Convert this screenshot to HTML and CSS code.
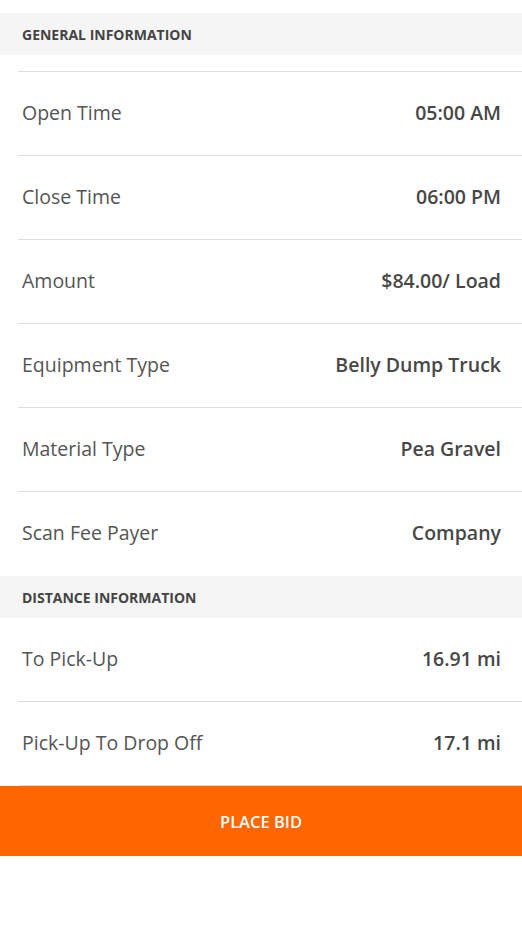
FILE: index.html
```html
<!DOCTYPE html>
<html>
<head>
<meta charset="utf-8">
<link rel="stylesheet" href="styles.css">
</head>
<body>
<div class="page">
  <div class="section-head">GENERAL INFORMATION</div>
  <div class="spacer"></div>
  <div class="row"><span class="label">Open Time</span><span class="value">05:00 AM</span></div>
  <div class="row"><span class="label">Close Time</span><span class="value">06:00 PM</span></div>
  <div class="row"><span class="label">Amount</span><span class="value">$84.00/ Load</span></div>
  <div class="row"><span class="label">Equipment Type</span><span class="value">Belly Dump Truck</span></div>
  <div class="row"><span class="label">Material Type</span><span class="value">Pea Gravel</span></div>
  <div class="row last"><span class="label">Scan Fee Payer</span><span class="value">Company</span></div>
  <div class="section-head">DISTANCE INFORMATION</div>
  <div class="row"><span class="label">To Pick-Up</span><span class="value">16.91 mi</span></div>
  <div class="row"><span class="label">Pick-Up To Drop Off</span><span class="value">17.1 mi</span></div>
  <button class="bid">PLACE BID</button>
</div>
</body>
</html>
```
FILE: styles.css
```css
html, body {
  margin: 0;
  padding: 0;
  background: #ffffff;
}
.page {
  padding-top: 13px;
  font-family: "Open Sans", "Liberation Sans", sans-serif;
  width: 522px;
}
.section-head {
  height: 42px;
  background: #f5f5f5;
  display: flex;
  align-items: center;
  padding-left: 22px;
  font-size: 14px;
  font-weight: 700;
  color: #444444;
  box-sizing: border-box;
}
.spacer {
  height: 16px;
  margin-left: 18px;
  border-bottom: 1px solid #dddddd;
}
.row {
  height: 83px;
  margin-left: 18px;
  border-bottom: 1px solid #dddddd;
  display: flex;
  align-items: center;
  justify-content: space-between;
  padding: 0 21px 2px 4px;
  box-sizing: content-box;
}
.row {
  height: 81px;
}
.row.last {
  border-bottom-color: #ffffff;
}
.label {
  font-size: 19.5px;
  color: #555555;
}
.value {
  font-size: 19.5px;
  font-weight: 600;
  color: #474747;
}
.bid {
  display: block;
  width: 100%;
  height: 70px;
  border: none;
  background: #ff6600;
  color: #ffffff;
  font-family: "Open Sans", "Liberation Sans", sans-serif;
  font-size: 16.5px;
  font-weight: 600;
  padding: 0;
  margin: 0;
}
```
